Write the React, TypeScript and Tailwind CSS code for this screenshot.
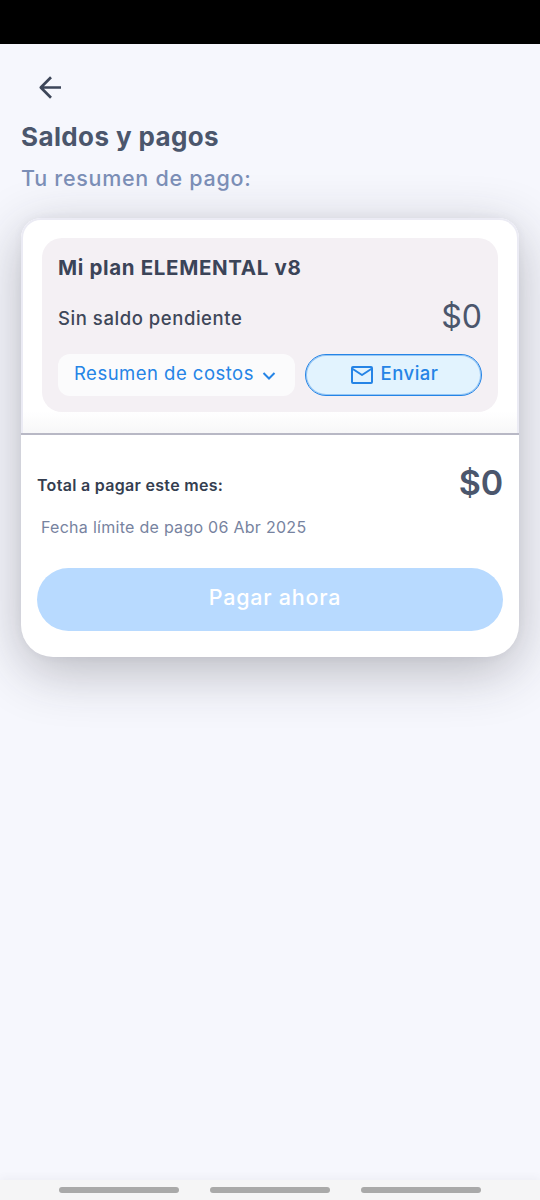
import React, { useState } from 'react';

const NAV_BARS = ['recientes', 'inicio', 'atras'];

function BackArrow() {
  return (
    <svg width="24" height="24" viewBox="0 0 24 24" fill="none" stroke="#3d4659" strokeWidth="2.7" strokeLinejoin="round">
      <path d="M24 12.5H4M14 2.3L3.8 12.5L14 22.7" />
    </svg>
  );
}

function MailIcon() {
  return (
    <svg width="24" height="20" viewBox="0 0 24 20" fill="none" stroke="#2584e6" strokeWidth="2" strokeLinejoin="round">
      <rect x="2" y="2" width="20" height="16" rx="1" />
      <path d="M2 3.5L12 10L22 3.5" />
    </svg>
  );
}

function ChevronIcon() {
  return (
    <svg className="mt-0.5" width="14" height="10" viewBox="0 0 14 10" fill="none" stroke="#2584e6" strokeWidth="2">
      <path d="M1.5 2L7 7.5L12.5 2" />
    </svg>
  );
}

function PlanCard() {
  const [isOpen, setIsOpen] = useState(false);

  return (
    <div className="h-[174px] rounded-[20px] bg-[#f4f0f4] px-4 pt-4">
      <h2 className="h-7 whitespace-nowrap text-[20.5px] font-bold leading-7 tracking-[0.65px] text-[#3b4458]">
        Mi plan ELEMENTAL v8
      </h2>
      <div className="mt-[14px] flex h-10 items-center justify-between">
        <span className="pt-1 text-[18.5px] font-medium leading-6 tracking-[0.55px] text-[#3e4759]">Sin saldo pendiente</span>
        <span className="pt-0.5 text-[32px] leading-10 text-[#4b566c]">$0</span>
      </div>
      <div className="mt-[18px] flex gap-[10px]">
        <button
          onClick={() => setIsOpen(!isOpen)}
          className="flex h-[42px] w-[237px] items-center gap-2 whitespace-nowrap rounded-xl bg-[#fbfbfc] pl-4 text-[18.5px] text-[#2584e6]"
        >
          <span className="pb-[2px] tracking-[0.48px]">Resumen de costos</span>
          <ChevronIcon />
        </button>
        <button className="flex h-[42px] w-[177px] items-center justify-center gap-[7px] rounded-full border border-[#2584e6] bg-[#e2f3fe] pl-px text-[18.5px] font-medium text-[#2584e6] shadow-[inset_0_0_0_1px_rgba(37,132,230,0.4)]">
          <MailIcon />
          <span className="pb-[2px] tracking-[0.5px]">Enviar</span>
        </button>
      </div>
    </div>
  );
}

function App() {
  return (
    <div className="flex h-[1200px] w-[540px] flex-col overflow-hidden bg-[#f6f7fd] font-[Inter,sans-serif]">
      {/* Status bar */}
      <div className="h-11 shrink-0 bg-black"></div>

      <main className="flex-1 px-[21px]">
        <button className="ml-4 mt-[31px] block h-6">
          <BackArrow />
        </button>
        <h1 className="mt-5 h-9 whitespace-nowrap text-[26px] font-bold leading-9 tracking-[0.38px] text-[#4b566c]">
          Saldos y pagos
        </h1>
        <p className="mt-[9px] h-7 whitespace-nowrap text-[21.5px] font-medium leading-7 tracking-[0.72px] text-[#7b8eb6]">
          Tu resumen de pago:
        </p>

        <section className="mt-[26px] h-[439px] rounded-t-[20px] rounded-b-[32px] bg-white shadow-[0_14px_54px_rgba(40,40,50,0.3),0_0_8px_rgba(60,60,110,0.06)]">
          <div className="h-[215px] rounded-t-[20px] border-x-2 border-t-2 border-[#ebebf4] bg-linear-to-b from-white from-90% to-[#f7f7f8] px-[19px] pt-[18px]">
            <PlanCard />
          </div>

          {/* Total */}
          <div className="border-t-2 border-[#b8b8c5] px-4 pt-[26px]">
            <div className="flex h-11 items-center justify-between">
              <span className="pt-1 text-[16px] font-semibold leading-6 tracking-[0.3px] text-[#353e50]">
                Total a pagar este mes:
              </span>
              <span className="text-[34px] font-semibold leading-10 tracking-[-0.2px] text-[#4b566c]">$0</span>
            </div>
            <p className="mt-[10px] h-6 pl-1 text-[16px] leading-6 tracking-[0.28px] text-[#7783a0]">
              Fecha límite de pago 06 Abr 2025
            </p>
            <button className="mt-[29px] h-[63px] w-full rounded-full bg-[#b8daff] pb-1 pl-[10px] text-[21.5px] font-medium tracking-[0.75px] text-white">
              Pagar ahora
            </button>
          </div>
        </section>
      </main>

      {/* System navigation */}
      <div className="flex h-5 shrink-0 items-center justify-center gap-[31px] bg-[#f5f5f6] shadow-[0_-2px_8px_rgba(80,80,110,0.06)]">
        {NAV_BARS.map((bar) => (
          <div key={bar} className="h-1.5 w-[120px] rounded-full bg-[#a9a9a9]"></div>
        ))}
      </div>
    </div>
  );
}

export default App;
